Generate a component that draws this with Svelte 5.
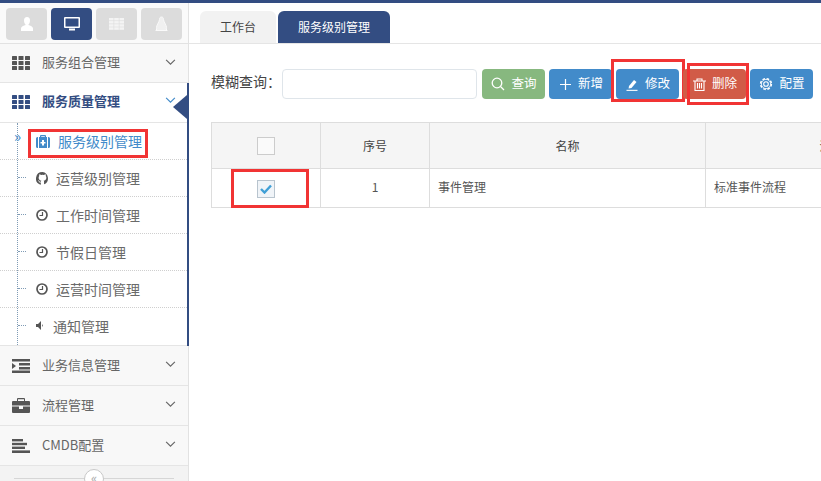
<script>
  const subItems = [
    { label: "服务级别管理", icon: "medkit", active: true },
    { label: "运营级别管理", icon: "github" },
    { label: "工作时间管理", icon: "clock" },
    { label: "节假日管理", icon: "clock" },
    { label: "运营时间管理", icon: "clock" },
    { label: "通知管理", icon: "volume" },
  ];
  const lowerGroups = [
    { label: "业务信息管理", icon: "indent" },
    { label: "流程管理", icon: "briefcase" },
    { label: "CMDB配置", icon: "lines" },
  ];
  const buttons = [
    { label: "查询", icon: "search", tone: "green" },
    { label: "新增", icon: "plus", tone: "blue" },
    { label: "修改", icon: "pencil", tone: "blue" },
    { label: "删除", icon: "trash", tone: "red" },
    { label: "配置", icon: "gear", tone: "blue" },
  ];
</script>

{#snippet grid()}
  <svg class="gicon" viewBox="0 0 18 14" width="18" height="14" fill="currentColor">
    {#each [0, 5, 10] as y}
      {#each [0, 6.5, 13] as x}
        <rect {x} {y} width="5" height="4" rx="0.5" />
      {/each}
    {/each}
  </svg>
{/snippet}

{#snippet chevron()}
  <svg class="chev" viewBox="0 0 12 8" width="11" height="7" fill="none" stroke="currentColor" stroke-width="1.3">
    <path d="M1 1l5 5 5-5" />
  </svg>
{/snippet}

{#snippet groupIcon(name)}
  {#if name === "indent"}
    <svg class="gicon" viewBox="0 0 18 14" width="18" height="14" fill="currentColor">
      <rect x="0" y="0" width="18" height="2.5" />
      <rect x="7" y="4" width="11" height="2.5" />
      <rect x="7" y="8" width="11" height="2.5" />
      <rect x="0" y="11.5" width="18" height="2.5" />
      <path d="M0 4l4 3-4 3z" />
    </svg>
  {:else if name === "briefcase"}
    <svg class="gicon" viewBox="0 0 18 15" width="18" height="15" fill="currentColor">
      <path d="M5 3V1a1 1 0 0 1 1-1h6a1 1 0 0 1 1 1v2h4a1 1 0 0 1 1 1v3.500H0V4a1 1 0 0 1 1-1zM6 1.200V3h6V1.200z" fill-rule="evenodd" />
      <path d="M0 8.500h7V11h4V8.500h7V14a1 1 0 0 1-1 1H1a1 1 0 0 1-1-1z" />
    </svg>
  {:else}
    <svg class="gicon" viewBox="0 0 18 14" width="18" height="14" fill="currentColor">
      <rect x="0" y="0" width="11" height="2.4" />
      <rect x="0" y="3.8" width="15" height="2.4" />
      <rect x="0" y="7.6" width="13" height="2.4" />
      <rect x="0" y="11.4" width="18" height="2.6" />
    </svg>
  {/if}
{/snippet}

{#snippet subIcon(name)}
  {#if name === "medkit"}
    <svg viewBox="0 0 14 13" width="14" height="13" fill="currentColor">
      <path fill-rule="evenodd" d="M4 2V1a1 1 0 0 1 1-1h4a1 1 0 0 1 1 1v1h1v11H3V2zM5.200 1.200V2h3.600v-.8zM6 5v2H4.500v1.600H6v2h2v-2h1.500V7H8V5z" />
      <path d="M0 3.500A1.500 1.500 0 0 1 1.500 2H2v11h-.5A1.500 1.500 0 0 1 0 11.500zM12 2h.5A1.500 1.500 0 0 1 14 3.500v8a1.500 1.500 0 0 1-1.500 1.500H12z" />
    </svg>
  {:else if name === "github"}
    <svg viewBox="0 0 13 13" width="13" height="13" fill="currentColor">
      <path d="M6.500 0a6.500 6.500 0 0 0-2.100 12.650c.3 0 .45-.15.45-.35v-1.800c-1.300.2-1.900-.4-2.100-1.100-.2-.4-.4-.7-.7-.9-.3-.2 0-.3.3-.2.5.1.800.5 1.100.9.400.6 1.100.6 1.500.3 0-.4.200-.7.400-.9-1.500-.2-2.700-1-2.700-2.900 0-.7.200-1.300.6-1.800-.1-.4-.2-1 .1-1.700.6 0 1.200.3 1.700.7a6 6 0 0 1 2.900 0c.5-.4 1.100-.7 1.700-.7.300.7.200 1.300.1 1.700.4.500.6 1.100.6 1.800 0 1.900-1.200 2.700-2.700 2.900.3.300.4.700.4 1.200v2c0 .2.150.35.45.35A6.500 6.500 0 0 0 6.500 0z" />
    </svg>
  {:else if name === "clock"}
    <svg viewBox="0 0 12 12" width="12" height="12" fill="none" stroke="currentColor">
      <circle cx="6" cy="6" r="5" stroke-width="1.700" />
      <path d="M6.500 3v3.500H3.500" stroke-width="1.200" />
    </svg>
  {:else}
    <svg viewBox="0 0 9 9" width="9" height="9" fill="currentColor">
      <path d="M0 3h2l3-3v9L2 6H0z" />
      <path d="M6 3a2 2 0 0 1 0 3z" />
    </svg>
  {/if}
{/snippet}

{#snippet btnIcon(name)}
  {#if name === "search"}
    <svg viewBox="0 0 14 14" width="14" height="14" fill="none" stroke="currentColor" stroke-width="1.300">
      <circle cx="6" cy="6" r="4.800" /><path d="M9.500 9.500l3.500 3.500" />
    </svg>
  {:else if name === "plus"}
    <svg viewBox="0 0 13 13" width="13" height="13" fill="none" stroke="currentColor" stroke-width="1.200">
      <path d="M6.500 1v11M1 6.500h11" />
    </svg>
  {:else if name === "pencil"}
    <svg viewBox="0 0 13 13" width="13" height="13" fill="currentColor">
      <path d="M3 8l5-6 2.500 2-5 6L2.600 10.600z" />
      <rect x="0.500" y="11.800" width="11" height="1.100" />
    </svg>
  {:else if name === "trash"}
    <svg viewBox="0 0 13 13" width="13" height="13" fill="none" stroke="currentColor" stroke-width="1.100">
      <path d="M0 3h13M4 3V1h5v2M2 3v9.500h9V3M4.500 5v5.500M6.500 5v5.500M8.500 5v5.500" />
    </svg>
  {:else}
    <svg viewBox="0 0 14 14" width="14" height="14" fill="none" stroke="currentColor">
      <circle cx="7" cy="7" r="2.300" stroke-width="1.100" />
      <circle cx="7" cy="7" r="5.400" stroke-width="1.500" stroke-dasharray="2.600 1.640" />
      <circle cx="7" cy="7" r="4.600" stroke-width="0.800" />
    </svg>
  {/if}
{/snippet}

<div class="page">
  <aside class="sidebar">
    <div class="shortcuts">
      <button class="sc" aria-label="用户">
        <svg viewBox="0 0 12 14" width="12" height="14" fill="#fff">
          <path d="M6 0c2 0 3 1.500 3 3.500S8 7.500 7.200 8c2.300.6 4.800 1.400 4.800 3.500V14H0v-2.500C0 9.400 2.500 8.600 4.800 8 4 7.500 3 5.500 3 3.500S4 0 6 0z" />
        </svg>
      </button>
      <button class="sc on" aria-label="桌面">
        <svg viewBox="0 0 16 14" width="16" height="14" fill="#fff">
          <path fill-rule="evenodd" d="M1 0h14a1 1 0 0 1 1 1v9a1 1 0 0 1-1 1H1a1 1 0 0 1-1-1V1a1 1 0 0 1 1-1zM1.500 1.500v8h13v-8z" />
          <rect x="5" y="11.500" width="6" height="2" />
        </svg>
      </button>
      <button class="sc" aria-label="表格">
        <svg viewBox="0 0 15 12" width="15" height="12" fill="#f4f4f4">
          {#each [0, 3.100, 6.200, 9.300] as y}
            {#each [0, 5.200, 10.400] as x}
              <rect {x} {y} width="4.600" height="2.500" />
            {/each}
          {/each}
        </svg>
      </button>
      <button class="sc" aria-label="Linux">
        <svg viewBox="0 0 13 16" width="13" height="16" fill="#f0f0f0" stroke="#fafafa" stroke-width="1">
          <path d="M6.500 1C5 1 4.500 2 4.500 3.500c0 2-3 5.500-3 8 0 .6.100 1 .3 1.500L.8 14.500h11.400L11.200 13c.2-.5.300-.9.300-1.500 0-2.500-3-6-3-8C8.500 2 8 1 6.500 1z" />
        </svg>
      </button>
    </div>

    <nav class="nav">
      <div class="group first">
        <span class="gi">{@render grid()}</span>
        <span class="gt">服务组合管理</span>
        {@render chevron()}
      </div>
      <div class="open">
        <div class="group current">
          <span class="gi">{@render grid()}</span>
          <span class="gt">服务质量管理</span>
          {@render chevron()}
          <span class="pointer"></span>
        </div>
        <ul class="subs">
          {#each subItems as s}
            <li class="sub" class:active={s.active}>
              {#if s.active}<span class="mark">»</span>{/if}
              <span class="si">{@render subIcon(s.icon)}</span>
              <span>{s.label}</span>
              {#if s.active}<span class="redbox side"></span>{/if}
            </li>
          {/each}
        </ul>
      </div>
      {#each lowerGroups as g}
        <div class="group">
          <span class="gi">{@render groupIcon(g.icon)}</span>
          <span class="gt">{g.label}</span>
          {@render chevron()}
        </div>
      {/each}
    </nav>

    <div class="collapse">
      <span class="knob">«</span>
    </div>
  </aside>

  <main class="main">
    <div class="tabs">
      <div class="tab">工作台</div>
      <div class="tab cur">服务级别管理</div>
    </div>

    <div class="toolbar">
      <label class="flabel" for="q">模糊查询：</label>
      <input id="q" class="field" type="text" />
      <div class="btns">
        {#each buttons as b}
          <button class="btn {b.tone}">
            {@render btnIcon(b.icon)}
            <span class="btxt">{b.label}</span>
            {#if b.label === "修改"}<span class="redbox edit"></span>{/if}
            {#if b.label === "删除"}<span class="redbox del"></span>{/if}
          </button>
        {/each}
      </div>
    </div>

    <table class="tbl">
      <colgroup>
        <col style="width:109px" />
        <col style="width:109px" />
        <col style="width:276px" />
        <col style="width:276px" />
      </colgroup>
      <thead>
        <tr>
          <th><span class="cb"></span></th>
          <th>序号</th>
          <th>名称</th>
          <th>流程名称</th>
        </tr>
      </thead>
      <tbody>
        <tr>
          <td class="mid">
            <span class="cb checked">
              <svg viewBox="0 0 12 10" width="12" height="10" fill="none" stroke="#3f9fd6" stroke-width="2.400">
                <path d="M1 5l3.500 3.500L11 1.500" />
              </svg>
            </span>
            <span class="redbox check"></span>
          </td>
          <td class="mid txt">1</td>
          <td class="txt">事件管理</td>
          <td class="txt">标准事件流程</td>
        </tr>
      </tbody>
    </table>
  </main>
</div>

<style>
  :global(body) {
    margin: 0;
    background: #fff;
    overflow: hidden;
  }
  .page {
    display: flex;
    width: 821px;
    height: 481px;
    border-top: 3px solid #334d82;
    box-sizing: border-box;
    overflow: hidden;
    font-family: "Noto Sans CJK SC", "Liberation Sans", sans-serif;
    color: #555;
  }
  .sidebar {
    width: 188px;
    flex: none;
    display: flex;
    flex-direction: column;
    border-right: 1px solid #e2e2e2;
    background: #f8f8f8;
  }
  .shortcuts {
    display: flex;
    gap: 4px;
    padding: 5px 6px 3px;
    height: 32px;
    border-bottom: 1px solid #e2e2e2;
    background: #fafafa;
  }
  .sc {
    width: 41px;
    height: 32px;
    padding: 0;
    border: none;
    border-radius: 4px;
    background: #dcdcdc;
    display: flex;
    align-items: center;
    justify-content: center;
  }
  .sc.on {
    background: #334d82;
  }
  .nav {
    display: flex;
    flex-direction: column;
  }
  .group {
    position: relative;
    display: flex;
    align-items: center;
    height: 39px;
    padding: 0 12px;
    border-bottom: 1px solid #e5e5e5;
    font-size: 13px;
    color: #666;
  }
  .group.first {
    height: 38px;
  }
  .group.first .gt {
    padding-bottom: 4px;
  }
  .gi {
    width: 18px;
    margin-right: 12px;
    display: flex;
    color: #555;
  }
  .gt {
    flex: 1;
    padding-bottom: 2px;
  }
  .chev {
    color: #666;
    margin-bottom: 2px;
  }
  .open {
    border-right: 2px solid #334d82;
    margin-right: -1px;
    background: #fff;
  }
  .group.current {
    height: 37px;
    background: #fff;
    color: #334d82;
    font-weight: 700;
    padding-right: 11px;
    padding-bottom: 2px;
  }
  .group.current .gi {
    color: #334d82;
  }
  .group.current .chev {
    color: #428bca;
  }
  .pointer {
    position: absolute;
    right: 0;
    top: 12px;
    border-style: solid;
    border-width: 12px 14px 12px 0;
    border-color: transparent #334d82 transparent transparent;
  }
  .subs {
    list-style: none;
    margin: 0;
    padding: 0;
    position: relative;
    border-bottom: 1px solid #e5e5e5;
  }
  .subs::before {
    content: "";
    position: absolute;
    left: 17px;
    top: 0;
    bottom: 0;
    border-left: 1px dotted #7f9bb5;
  }
  .sub {
    position: relative;
    display: flex;
    align-items: center;
    height: 36px;
    padding-left: 36px;
    border-bottom: 1px dotted #cfcfcf;
    font-size: 14px;
    color: #6a6a6a;
  }
  .sub:last-child {
    border-bottom: none;
    height: 35px;
    padding-bottom: 2px;
  }
  .sub::before {
    content: "";
    position: absolute;
    left: 18px;
    top: 17px;
    width: 8px;
    border-top: 1px dotted #7f9bb5;
  }
  .sub.active::before {
    display: none;
  }
  .si {
    display: flex;
    width: 20px;
    color: #555;
    align-items: center;
  }
  .sub:last-child .si {
    width: 17px;
  }
  .sub.active {
    color: #428bca;
  }
  .sub.active .si {
    color: #428bca;
    width: 22px;
  }
  .mark {
    position: absolute;
    left: 14px;
    top: 5px;
    font-size: 15px;
    line-height: 16px;
    color: #428bca;
  }
  .redbox {
    position: absolute;
    border: 3px solid #f13434;
    box-sizing: border-box;
    pointer-events: none;
  }
  .redbox.side {
    left: 28px;
    top: 6px;
    width: 120px;
    height: 29px;
  }
  .collapse {
    position: relative;
    flex: 1;
    background: #f3f3f3;
  }
  .collapse::before {
    content: "";
    position: absolute;
    left: 14px;
    right: 14px;
    top: 12px;
    border-top: 1px solid #d6d6d6;
  }
  .knob {
    position: absolute;
    left: 84px;
    top: 3px;
    width: 18px;
    height: 18px;
    border-radius: 50%;
    border: 1px solid #c8c8c8;
    background: #fff;
    color: #aaa;
    font-size: 13px;
    line-height: 15px;
    text-align: center;
  }
  .main {
    flex: 1;
    min-width: 0;
    overflow: hidden;
  }
  .tabs {
    display: flex;
    gap: 2px;
    padding: 8px 0 0 11px;
    height: 32px;
    border-bottom: 1px solid #e5e5e5;
  }
  .tab {
    width: 76px;
    height: 32px;
    border-radius: 6px 6px 0 0;
    background: #f2f2f2;
    color: #444;
    font-size: 12px;
    line-height: 32px;
    text-align: center;
  }
  .tab.cur {
    width: 112px;
    background: #334d82;
    color: #fff;
  }
  .toolbar {
    display: flex;
    align-items: center;
    padding: 25px 0 0 22px;
  }
  .flabel {
    width: 71px;
    height: 30px;
    font-size: 14px;
    line-height: 25px;
    color: #444;
    white-space: nowrap;
  }
  .field {
    width: 195px;
    height: 30px;
    box-sizing: border-box;
    border: 1px solid #dfe5ea;
    border-radius: 4px;
    background: #fff;
    margin: 0;
  }
  .btns {
    display: flex;
    gap: 4px;
    margin-left: 5px;
  }
  .btn {
    position: relative;
    display: flex;
    align-items: center;
    justify-content: center;
    gap: 6px;
    width: 63px;
    height: 30px;
    padding: 0 0 0 1px;
    border: none;
    border-radius: 4px;
    color: #fff;
    font: inherit;
    font-size: 12.5px;
  }
  .btxt {
    padding-bottom: 3px;
  }
  .green {
    background: #87b87f;
  }
  .blue {
    background: #428bca;
  }
  .red {
    background: #d15b47;
  }
  .redbox.edit {
    left: -5px;
    top: -10px;
    width: 74px;
    height: 43px;
  }
  .redbox.del {
    left: 4px;
    top: -6px;
    width: 62px;
    height: 42px;
  }
  .tbl {
    margin: 23px 0 0 22px;
    width: 770px;
    table-layout: fixed;
    border-collapse: collapse;
    font-size: 12px;
    color: #555;
  }
  th,
  td {
    border: 1px solid #ddd;
    padding: 0 8px;
  }
  th {
    height: 45px;
    background: #f5f5f5;
    font-weight: 400;
    color: #444;
    text-align: center;
  }
  td {
    height: 38px;
    position: relative;
  }
  td.txt {
    padding-bottom: 3px;
    height: 35px;
  }
  td.mid {
    text-align: center;
  }
  .cb {
    display: inline-flex;
    align-items: center;
    justify-content: center;
    width: 16px;
    height: 16px;
    border: 1px solid #ccc;
    background: #fafafa;
    vertical-align: middle;
  }
  .cb.checked {
    background: #f0f4f8;
    border-color: #b8c4ce;
  }
  .redbox.check {
    left: 19px;
    top: 0;
    width: 78px;
    height: 39px;
  }
</style>
